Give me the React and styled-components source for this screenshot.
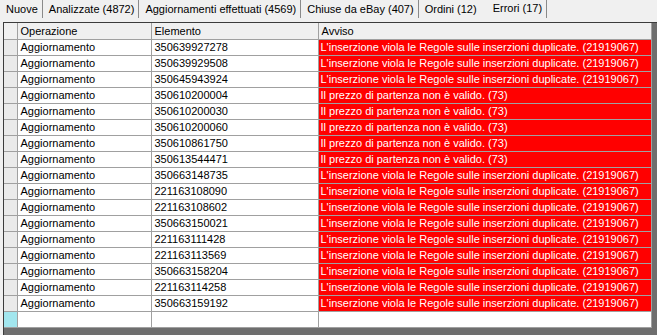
import React from 'react';
import styled, { createGlobalStyle } from 'styled-components';

const GlobalStyle = createGlobalStyle`
    html, body {
        margin: 0;
        padding: 0;
        height: 100%;
        overflow: hidden;
        background: #f0f0f0;
    }
    body {
        font-family: "Liberation Sans", Arial, sans-serif;
        font-size: 11px;
        color: #000;
    }
    #root {
        height: 100%;
    }
`;

const Page = styled.div`
    display: flex;
    flex-direction: column;
    height: 100vh;
`;

const TabStrip = styled.div`
    display: flex;
    flex-direction: row;
    height: 18px;
    align-items: stretch;
`;

const Tab = styled.div`
    display: flex;
    align-items: center;
    padding: 0 ${(p) => (p.$active ? '4px' : '4px')} 1px ${(p) => (p.$active ? '11px' : '6px')};
    border-right: 1px solid ${(p) => (p.$noSep ? 'transparent' : '#8a8a8a')};
    white-space: nowrap;
    margin-top: ${(p) => (p.$active ? '-1px' : '0')};
`;

const GridFrame = styled.div`
    flex: 1;
    margin: 4px 0 0 3px;
    background: #6e6e6e;
    border-top: 1px solid #3c3c3c;
    border-left: 1px solid #3c3c3c;
    overflow: hidden;
`;

const Table = styled.table`
    border-collapse: collapse;
    table-layout: fixed;
    width: 647px;
    background: #fff;
`;

const HeadCell = styled.th`
    height: 16px;
    padding: 0 3px;
    font-weight: normal;
    text-align: left;
    background: #f0f0f0;
    border-right: 1px solid #a0a0a0;
    border-bottom: 1px solid #a0a0a0;
    white-space: nowrap;
    overflow: hidden;
`;

const RowHead = styled.td`
    height: 15px;
    padding: 0;
    background: ${(p) => (p.$newRow ? '#a2e6ee' : '#eaeaea')};
    border-right: 1px solid #a0a0a0;
    border-bottom: 1px solid #a0a0a0;
`;

const Cell = styled.td`
    height: 15px;
    padding: 0 ${(p) => (p.$error ? '2px' : '3px')};
    background: ${(p) => (p.$error ? '#ff0000' : '#fff')};
    color: ${(p) => (p.$error ? '#fff' : '#000')};
    border-right: 1px solid #a0a0a0;
    border-bottom: 1px solid #a0a0a0;
    white-space: nowrap;
    overflow: hidden;
    line-height: 15px;
`;

const DUP = "L'inserzione viola le Regole sulle inserzioni duplicate. (21919067)";
const PREZZO = 'Il prezzo di partenza non è valido. (73)';

const rows = [
    ['350639927278', DUP],
    ['350639929508', DUP],
    ['350645943924', DUP],
    ['350610200004', PREZZO],
    ['350610200030', PREZZO],
    ['350610200060', PREZZO],
    ['350610861750', PREZZO],
    ['350613544471', PREZZO],
    ['350663148735', DUP],
    ['221163108090', DUP],
    ['221163108602', DUP],
    ['350663150021', DUP],
    ['221163111428', DUP],
    ['221163113569', DUP],
    ['350663158204', DUP],
    ['221163114258', DUP],
    ['350663159192', DUP],
];

const tabs = [
    { label: 'Nuove' },
    { label: 'Analizzate (4872)' },
    { label: 'Aggiornamenti effettuati (4569)' },
    { label: 'Chiuse da eBay (407)' },
    { label: 'Ordini (12)', noSep: true },
    { label: 'Errori (17)', active: true },
];

const App = () => {
    return (
        <Page>
            <GlobalStyle />
            <TabStrip>
                {tabs.map((t) => (
                    <Tab key={t.label} $active={t.active} $noSep={t.noSep}>
                        {t.label}
                    </Tab>
                ))}
            </TabStrip>
            <GridFrame>
                <Table>
                    <colgroup>
                        <col style={{ width: 13 }} />
                        <col style={{ width: 134 }} />
                        <col style={{ width: 167 }} />
                        <col style={{ width: 333 }} />
                    </colgroup>
                    <thead>
                        <tr>
                            <HeadCell />
                            <HeadCell>Operazione</HeadCell>
                            <HeadCell>Elemento</HeadCell>
                            <HeadCell>Avviso</HeadCell>
                        </tr>
                    </thead>
                    <tbody>
                        {rows.map(([id, msg]) => (
                            <tr key={id}>
                                <RowHead />
                                <Cell>Aggiornamento</Cell>
                                <Cell>{id}</Cell>
                                <Cell $error>{msg}</Cell>
                            </tr>
                        ))}
                        <tr>
                            <RowHead $newRow />
                            <Cell />
                            <Cell />
                            <Cell />
                        </tr>
                    </tbody>
                </Table>
            </GridFrame>
        </Page>
    );
};

export default App;
